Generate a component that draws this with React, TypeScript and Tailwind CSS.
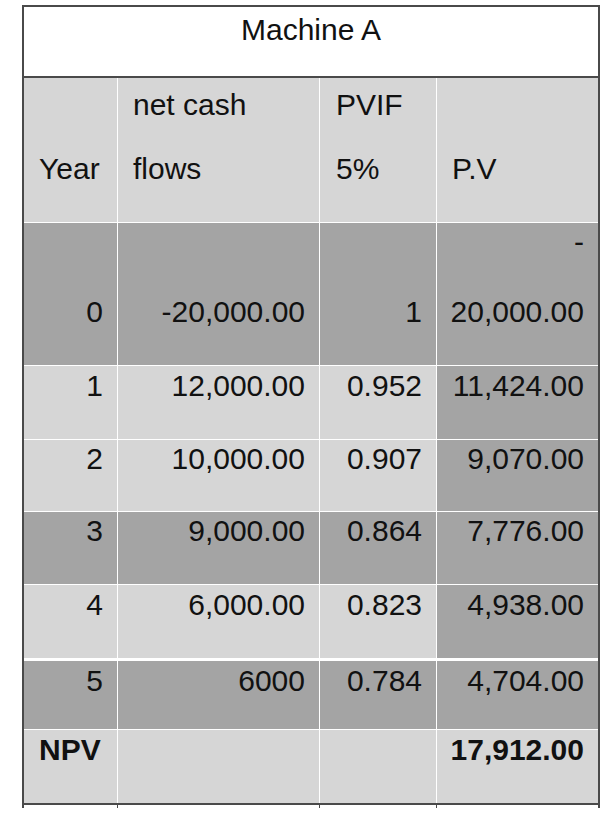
import React from 'react';

const LIGHT = 'bg-[#d6d6d6]';
const DARK = 'bg-[#a4a4a4]';

type Row = {
  year: string;
  flow: string;
  pvif: string;
  pv: string;
  shade: 'light' | 'dark';
  h: string;
  top: string;
};

const ROWS: Row[] = [
  { year: '1', flow: '12,000.00', pvif: '0.952', pv: '11,424.00', shade: 'light', h: 'h-[74px]', top: 'pt-[3px]' },
  { year: '2', flow: '10,000.00', pvif: '0.907', pv: '9,070.00', shade: 'light', h: 'h-[72px]', top: 'pt-[2px]' },
  { year: '3', flow: '9,000.00', pvif: '0.864', pv: '7,776.00', shade: 'dark', h: 'h-[73px]', top: 'pt-[2px]' },
  { year: '4', flow: '6,000.00', pvif: '0.823', pv: '4,938.00', shade: 'light', h: 'h-[74px]', top: 'pt-[3px]' },
];

const Cell: React.FC<{ w: string; bg: string; right?: boolean; first?: boolean; children?: React.ReactNode; className?: string }> = ({ w, bg, right, first, children, className }) => (
  <div className={`${w} ${bg} ${first ? '' : 'border-l border-white'} ${right ? 'text-right pr-[14px]' : 'pl-[15px]'} ${className ?? ''}`}>
    {children}
  </div>
);

export default function App() {
  return (
    <div className="min-h-[815px] bg-white pt-[5px] pl-[22px]" style={{ fontFamily: '"Liberation Sans", Arial, sans-serif' }}>
      <div className="w-[578px] border-2 border-[#4a4a4a] text-[30px] leading-[34px] text-[#111]">
        <div className="h-[71px] border-b-2 border-[#4a4a4a] pt-[6px] text-center">Machine A</div>

        {/* header */}
        <div className="flex h-[144px]">
          <Cell w="w-[93px]" bg={LIGHT} first className="pt-[74px]">Year</Cell>
          <Cell w="w-[202px]" bg={LIGHT} className="pl-[15px] pt-[10px]">
            <div>net cash</div>
            <div className="mt-[30px]">flows</div>
          </Cell>
          <Cell w="w-[117px]" bg={LIGHT} className="pl-[16px] pt-[10px]">
            <div>PVIF</div>
            <div className="mt-[30px]">5%</div>
          </Cell>
          <Cell w="flex-1" bg={LIGHT} className="pl-[15px] pt-[74px]">P.V</Cell>
        </div>

        {/* year 0 */}
        <div className="flex h-[143px] border-t border-white">
          <Cell w="w-[93px]" bg={DARK} right first className="pt-[72px]">0</Cell>
          <Cell w="w-[202px]" bg={DARK} right className="pt-[72px]">-20,000.00</Cell>
          <Cell w="w-[117px]" bg={DARK} right className="pt-[72px]">1</Cell>
          <Cell w="flex-1" bg={DARK} right className="pt-[2px]">
            <div>-</div>
            <div className="mt-[36px]">20,000.00</div>
          </Cell>
        </div>

        {ROWS.map((r) => {
          const bg = r.shade === 'dark' ? DARK : LIGHT;
          return (
            <div key={r.year} className={`flex ${r.h} border-t border-white`}>
              <Cell w="w-[93px]" bg={bg} right first className={r.top}>{r.year}</Cell>
              <Cell w="w-[202px]" bg={bg} right className={r.top}>{r.flow}</Cell>
              <Cell w="w-[117px]" bg={bg} right className={r.top}>{r.pvif}</Cell>
              <Cell w="flex-1" bg={DARK} right className={r.top}>{r.pv}</Cell>
            </div>
          );
        })}

        {/* year 5 */}
        <div className="flex h-[71px] border-t-[3px] border-white">
          <Cell w="w-[93px]" bg={DARK} right first className="pt-[3px]">5</Cell>
          <Cell w="w-[202px]" bg={DARK} right className="pt-[3px]">6000</Cell>
          <Cell w="w-[117px]" bg={DARK} right className="pt-[3px]">0.784</Cell>
          <Cell w="flex-1" bg={DARK} right className="pt-[3px]">4,704.00</Cell>
        </div>

        {/* NPV */}
        <div className="flex h-[74px] border-t border-white font-bold">
          <Cell w="w-[93px]" bg={LIGHT} first className="pl-[15px] pt-[3px]">NPV</Cell>
          <Cell w="w-[202px]" bg={LIGHT} />
          <Cell w="w-[117px]" bg={LIGHT} />
          <Cell w="flex-1" bg={LIGHT} right className="pt-[3px]">17,912.00</Cell>
        </div>
      </div>

      {/* tick marks under the bottom border */}
      <div className="flex h-[3px] w-[578px]">
        <div className="w-[2px] bg-[#4a4a4a]" />
        <div className="w-[93px]" />
        <div className="w-px bg-[#4a4a4a]" />
        <div className="w-[201px]" />
        <div className="w-px bg-[#4a4a4a]" />
        <div className="w-[116px]" />
        <div className="w-px bg-[#4a4a4a]" />
        <div className="flex-1" />
        <div className="w-[2px] bg-[#4a4a4a]" />
      </div>
    </div>
  );
}
